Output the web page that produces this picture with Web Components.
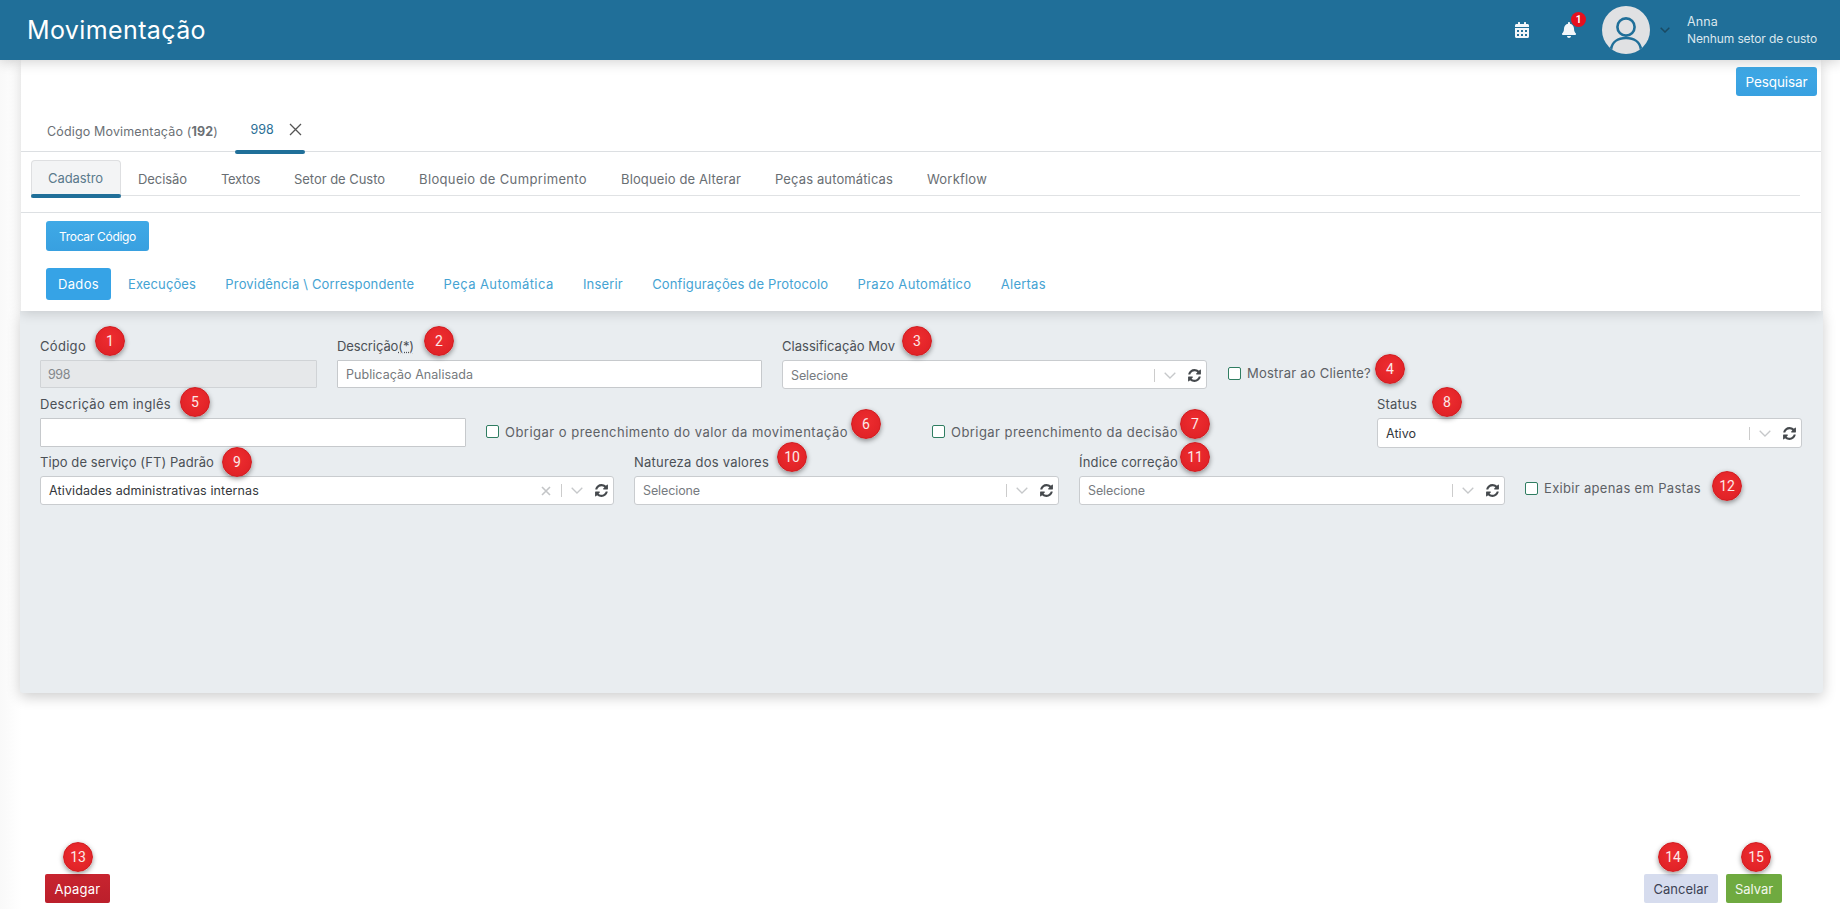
<!DOCTYPE html>
<html lang="pt-BR"><head><meta charset="utf-8"><title>Movimentação</title>
<style>
html,body{margin:0;height:909px;overflow:hidden}
body{position:relative;background:linear-gradient(90deg,#f9f9f9,#fff 22px);font-family:Inter,"Liberation Sans",sans-serif;font-size:13px;color:#555;display:flex;flex-direction:column}
</style></head><body>
<mov-header>
  <t-x slot="title" w="179">Movimentação</t-x>
  <t-x slot="user" w="31">Anna</t-x>
  <t-x slot="sector" w="130">Nenhum setor de custo</t-x>
</mov-header>
<mov-main>
  <mov-card>
    <mov-btn slot="search" kind="blue" style="width:81px;height:29px;font-size:13.5px"><t-x w="62">Pesquisar</t-x></mov-btn>
    <mov-tab slot="tabs"><t-x w="171">Código Movimentação (<b>192</b>)</t-x></mov-tab>
    <mov-tab slot="tabs" active closable><t-x w="23">998</t-x></mov-tab>
    <mov-subtab slot="subtabs" active><t-x w="55">Cadastro</t-x></mov-subtab>
    <mov-subtab slot="subtabs"><t-x w="49">Decisão</t-x></mov-subtab>
    <mov-subtab slot="subtabs"><t-x w="39">Textos</t-x></mov-subtab>
    <mov-subtab slot="subtabs"><t-x w="91">Setor de Custo</t-x></mov-subtab>
    <mov-subtab slot="subtabs"><t-x w="168">Bloqueio de Cumprimento</t-x></mov-subtab>
    <mov-subtab slot="subtabs"><t-x w="120">Bloqueio de Alterar</t-x></mov-subtab>
    <mov-subtab slot="subtabs"><t-x w="118">Peças automáticas</t-x></mov-subtab>
    <mov-subtab slot="subtabs"><t-x w="60">Workflow</t-x></mov-subtab>
    <mov-btn slot="action" kind="blue" style="width:103px;height:30px;font-size:12px"><t-x w="77">Trocar Código</t-x></mov-btn>
    <mov-pill slot="pills" active><t-x w="41">Dados</t-x></mov-pill>
    <mov-pill slot="pills"><t-x w="68">Execuções</t-x></mov-pill>
    <mov-pill slot="pills"><t-x w="189">Providência \ Correspondente</t-x></mov-pill>
    <mov-pill slot="pills"><t-x w="110">Peça Automática</t-x></mov-pill>
    <mov-pill slot="pills"><t-x w="40">Inserir</t-x></mov-pill>
    <mov-pill slot="pills"><t-x w="176">Configurações de Protocolo</t-x></mov-pill>
    <mov-pill slot="pills"><t-x w="114">Prazo Automático</t-x></mov-pill>
    <mov-pill slot="pills"><t-x w="45">Alertas</t-x></mov-pill>
  </mov-card>
  <mov-panel>
    <mov-row style="grid-template-columns:277px 425px 425px 1fr;column-gap:20px;">
      <mov-field><t-x slot="label" w="46">Código</t-x><mov-input disabled style="padding-top:1px"><t-x w="22">998</t-x></mov-input></mov-field>
      <mov-field><t-x slot="label" w="77">Descrição<span style="text-decoration:underline dotted">(*)</span></t-x><mov-input style="padding-top:1px"><t-x w="127">Publicação Analisada</t-x></mov-input></mov-field>
      <mov-field><t-x slot="label" w="113">Classificação Mov</t-x><mov-select placeholder style="padding-top:1px"><t-x w="57">Selecione</t-x></mov-select></mov-field>
      <mov-check style="margin:24px 0 0 1px;height:26px"><t-x w="124">Mostrar ao Cliente?</t-x></mov-check>
    </mov-row>
    <mov-row style="grid-template-columns:426px 426px 425px 1fr;column-gap:20px;margin-top:5px">
      <mov-field><t-x slot="label" w="131">Descrição em inglês</t-x><mov-input style="height:29px"></mov-input></mov-field>
      <mov-check style="margin-top:24px;height:27px"><t-x w="343">Obrigar o preenchimento do valor da movimentação</t-x></mov-check>
      <mov-check style="margin-top:24px;height:27px"><t-x w="227">Obrigar preenchimento da decisão</t-x></mov-check>
      <mov-field><t-x slot="label" w="40">Status</t-x><mov-select style="height:30px"><t-x w="30">Ativo</t-x></mov-select></mov-field>
    </mov-row>
    <mov-row style="grid-template-columns:574px 425px 426px 1fr;column-gap:20px;margin-top:4px">
      <mov-field><t-x slot="label" w="174">Tipo de serviço (FT) Padrão</t-x><mov-select clearable><t-x w="210">Atividades administrativas internas</t-x></mov-select></mov-field>
      <mov-field><t-x slot="label" w="135">Natureza dos valores</t-x><mov-select placeholder><t-x w="57">Selecione</t-x></mov-select></mov-field>
      <mov-field><t-x slot="label" w="99">Índice correção</t-x><mov-select placeholder><t-x w="57">Selecione</t-x></mov-select></mov-field>
      <mov-check style="margin-top:24px;height:24px"><t-x w="157">Exibir apenas em Pastas</t-x></mov-check>
    </mov-row>
  </mov-panel>
  <mov-footer>
    <mov-btn slot="left" kind="red" style="width:65px"><t-x w="46">Apagar</t-x></mov-btn>
    <mov-btn slot="right" kind="gray" style="width:74px"><t-x w="55">Cancelar</t-x></mov-btn>
    <mov-btn slot="right" kind="green" style="width:56px"><t-x w="38">Salvar</t-x></mov-btn>
  </mov-footer>
</mov-main>
<mov-badge style="left:95px;top:326px">1</mov-badge>
<mov-badge style="left:424px;top:326px">2</mov-badge>
<mov-badge style="left:902px;top:326px">3</mov-badge>
<mov-badge style="left:1375px;top:354px">4</mov-badge>
<mov-badge style="left:180px;top:387px">5</mov-badge>
<mov-badge style="left:851px;top:409px">6</mov-badge>
<mov-badge style="left:1180px;top:409px">7</mov-badge>
<mov-badge style="left:1432px;top:387px">8</mov-badge>
<mov-badge style="left:222px;top:447px">9</mov-badge>
<mov-badge style="left:777px;top:442px">10</mov-badge>
<mov-badge style="left:1180px;top:442px">11</mov-badge>
<mov-badge style="left:1712px;top:471px">12</mov-badge>
<mov-badge style="left:63px;top:842px">13</mov-badge>
<mov-badge style="left:1658px;top:842px">14</mov-badge>
<mov-badge style="left:1741px;top:842px">15</mov-badge>
<script>
const REFRESH='M1639 1056q0 5-1 7-64 268-268 434.5t-478 166.5q-146 0-282.5-55t-243.5-157l-129 129q-19 19-45 19t-45-19-19-45v-448q0-26 19-45t45-19h448q26 0 45 19t19 45-19 45l-137 137q71 66 161 102t187 36q134 0 250-65t186-179q11-17 53-117 8-23 30-23h192q13 0 22.5 9.5t9.5 22.5zm25-800v448q0 26-19 45t-45 19h-448q-26 0-45-19t-19-45 19-45l138-138q-148-137-349-137-134 0-250 65t-186 179q-11 17-53 117-8 23-30 23h-199q-13 0-22.5-9.5t-9.5-22.5v-7q65-268 270-434.5t480-166.5q146 0 284 55.5t245 156.5l130-129q19-19 45-19t45 19 19 45z';
const CAL='M0 464c0 26.5 21.5 48 48 48h352c26.5 0 48-21.5 48-48V192H0v272zm320-196c0-6.6 5.4-12 12-12h40c6.6 0 12 5.4 12 12v40c0 6.6-5.4 12-12 12h-40c-6.6 0-12-5.4-12-12v-40zm0 128c0-6.6 5.4-12 12-12h40c6.6 0 12 5.4 12 12v40c0 6.6-5.4 12-12 12h-40c-6.6 0-12-5.4-12-12v-40zM192 268c0-6.6 5.4-12 12-12h40c6.6 0 12 5.4 12 12v40c0 6.6-5.4 12-12 12h-40c-6.6 0-12-5.4-12-12v-40zm0 128c0-6.6 5.4-12 12-12h40c6.6 0 12 5.4 12 12v40c0 6.6-5.4 12-12 12h-40c-6.6 0-12-5.4-12-12v-40zM64 268c0-6.6 5.4-12 12-12h40c6.6 0 12 5.4 12 12v40c0 6.6-5.4 12-12 12H76c-6.6 0-12-5.4-12-12v-40zm0 128c0-6.6 5.4-12 12-12h40c6.6 0 12 5.4 12 12v40c0 6.6-5.4 12-12 12H76c-6.6 0-12-5.4-12-12v-40zM400 64h-48V16c0-8.8-7.2-16-16-16h-32c-8.8 0-16 7.2-16 16v48H160V16c0-8.8-7.2-16-16-16h-32c-8.8 0-16 7.2-16 16v48H48C21.5 64 0 85.5 0 112v48h448v-48c0-26.5-21.5-48-48-48z';
const BELL='M224 512c35.32 0 63.97-28.65 63.97-64H160.03c0 35.35 28.65 64 63.97 64zm215.39-149.71c-19.32-20.76-55.47-51.99-55.47-154.29 0-77.7-54.48-139.9-127.94-155.16V32c0-17.67-14.32-32-31.98-32s-31.98 14.33-31.98 32v20.84C118.56 68.1 64.08 130.3 64.08 208c0 102.3-36.15 133.53-55.47 154.29-6 6.45-8.66 14.16-8.61 21.71.11 16.4 12.98 32 32.1 32h383.8c19.12 0 32-15.6 32.1-32 .05-7.55-2.61-15.27-8.61-21.71z';
function def(name,html,extra){
  class C extends HTMLElement{
    constructor(){super();this.attachShadow({mode:'open'}).innerHTML=html;}
    connectedCallback(){extra&&extra.call(this);}
  }
  customElements.define(name,C);
}
def('mov-header',`<style>
:host{display:flex;align-items:center;height:60px;background:#206f99;color:#fff;padding-left:27px;box-shadow:0 2px 12px rgba(0,0,0,.18);position:relative;z-index:3;flex:none}
.t{font-size:25px;line-height:1;flex:1}
.cal{width:14px;height:16px;fill:#f3f7fa;margin-right:33px}
.bell{position:relative;width:14px;height:16px;margin-right:26px}
.bell svg{width:14px;height:16px;fill:#f3f7fa;display:block}
.n{position:absolute;left:9px;top:-10px;width:15px;height:15px;border-radius:50%;background:#e60f1e;font:700 10px/15px Roboto,sans-serif;text-align:center;color:#fff}
.av{width:48px;height:48px;display:block}
.ch{width:10px;height:6px;margin:0 17px 0 10px;fill:none;stroke:#1a4a63;stroke-width:1.5}
.u{width:153px;color:#dbe7ee;font-size:12px;line-height:17px}
.u div:first-child{font-size:12.5px}
</style>
<div class="t"><slot name="title"></slot></div>
<svg class="cal" viewBox="0 0 448 512"><path d="${CAL}"/></svg>
<div class="bell"><svg viewBox="0 0 448 512"><path d="${BELL}"/></svg><span class="n">1</span></div>
<svg class="av" viewBox="0 0 48 48"><defs><clipPath id="c"><circle cx="24" cy="24" r="24"/></clipPath></defs><circle cx="24" cy="24" r="24" fill="#e0e1e3"/><g clip-path="url(#c)" fill="none" stroke="#206f99" stroke-width="2.6"><circle cx="24" cy="21" r="8.6"/><path d="M9 43.5C10 36 16 32 24 32s14 4 15 11.5"/></g></svg>
<svg class="ch" viewBox="0 0 10 6"><path d="M.7.7 5 5 9.3.7"/></svg>
<div class="u"><div><slot name="user"></slot></div><div><slot name="sector"></slot></div></div>`);
def('mov-main',`<style>
:host{display:flex;flex-direction:column;flex:1;padding:0 18px 6px 20px;min-height:0}
</style><slot></slot>`);
def('mov-card',`<style>
:host{display:block;margin-left:1px;margin-right:1px;background:#fff;box-shadow:0 2px 12px rgba(0,0,0,.16);position:relative;z-index:2;height:251px;flex:none}
.s{display:flex;justify-content:flex-end;padding:7px 4px 0 0}
.tabs{display:flex;align-items:flex-end;height:55px;border-bottom:1px solid #dcdfe2}
.wrap{height:61px;box-sizing:border-box;border-bottom:1px solid #dde0e3;padding:8px 21px 0 10px}
.sub{display:flex;height:36px;box-sizing:border-box;border-bottom:1px solid #e0e2e4}
.act{padding:8px 0 0 25px;display:flex}
.pills{display:flex;align-items:center;gap:29.3px;padding:17px 0 0 25px}
</style>
<div class="s"><slot name="search"></slot></div>
<div class="tabs"><slot name="tabs"></slot></div>
<div class="wrap"><div class="sub"><slot name="subtabs"></slot></div></div>
<div class="act"><slot name="action"></slot></div>
<div class="pills"><slot name="pills"></slot></div>`);
def('mov-tab',`<style>
:host{display:flex;align-items:center;position:relative;height:40px;padding:0 17px 0 26px;font-size:12.5px;color:#6b7075;white-space:nowrap}
:host([active]){height:44px;width:70px;box-sizing:border-box;padding:0 0 0 15.6px;color:#2b6f96}
:host([active])::after{content:"";position:absolute;left:0;right:0;bottom:-3px;height:4px;border-radius:2px;background:#206f99}
svg{display:none;width:13px;height:13px;margin-left:15px;stroke:#555;stroke-width:1.3;fill:none}
:host([closable]) svg{display:block}
</style><slot></slot><svg viewBox="0 0 13 13"><path d="M1 1l11 11M12 1 1 12"/></svg>`);
def('mov-subtab',`<style>
:host{display:flex;align-items:center;box-sizing:border-box;height:35px;padding:2px 17px 0;color:#696e73;font-size:13px;position:relative}
:host([active]){height:38px;padding:0 17px 3px 16px;background:#f3f4f5;border:1px solid #dedfe1;border-bottom:0;border-radius:4px 4px 0 0;color:#5a7a8c;margin-bottom:-3px}
:host([active])::after{content:"";position:absolute;left:-1px;right:-1px;bottom:0;height:4px;background:#206f99;border-radius:2px}
</style><slot></slot>`);
def('mov-pill',`<style>
:host{display:flex;align-items:center;height:32px;color:#45a3d3;font-size:13px;white-space:nowrap}
:host([active]){box-sizing:border-box;width:65px;padding-left:12px;margin-right:-12.3px;background:#36a3e6;color:#fff;border-radius:3px}
</style><slot></slot>`);
def('mov-btn',`<style>
:host{display:flex;align-items:center;justify-content:center;box-sizing:border-box;height:29px;border-radius:2px;font-size:13px;white-space:nowrap}
:host([kind=blue]){background:linear-gradient(#3fa9e6,#38a0e0);color:#fff;border-radius:3px}
:host([kind=red]){background:linear-gradient(#c8242f,#bb1f2b);color:#fff}
:host([kind=gray]){background:#d6dcee;color:#3c4254}
:host([kind=green]){background:#6faa40;color:#f2f7ec}
</style><slot></slot>`);
def('mov-panel',`<style>
:host{display:block;height:382px;flex:none;box-sizing:border-box;background:#e9edf0;padding:25px 21px 0 20px;box-shadow:0 4px 14px rgba(0,0,0,.2);border-radius:0 0 3px 3px;position:relative;z-index:1;margin-right:-1px}
</style><slot></slot>`);
def('mov-row',`<style>:host{display:grid;align-items:start}</style><slot></slot>`);
def('mov-field',`<style>
:host{display:block}
.l{height:24px;line-height:20px;color:#4b5056;font-size:13px;white-space:nowrap}
</style><div class="l"><slot name="label"></slot></div><slot></slot>`);
def('mov-input',`<style>
:host{display:flex;align-items:center;box-sizing:border-box;height:28px;background:#fff;border:1px solid #c6c9cc;border-radius:1px;padding-left:8px;color:#75797d;font-size:12.5px}
:host([disabled]){background:#e6e8ea;padding-left:7px;border-color:#d0d3d6;color:#83878b}
</style><slot></slot>`);
def('mov-select',`<style>
:host{display:flex;align-items:center;box-sizing:border-box;height:29px;background:#fff;border:1px solid #c9cccf;border-radius:3px;padding:0 4px 0 8px;color:#33373b;font-size:12.5px}
:host([placeholder]){color:#777b7f}
.v{flex:1;white-space:nowrap}
.x{display:none;width:10px;height:10px;stroke:#c3c5c7;stroke-width:1.6;fill:none;margin-right:10px}
:host([clearable]) .x{display:block}
.s{width:1px;height:13px;background:#ccc}
.c{width:12px;height:7px;margin:0 11px 0 9px;stroke:#c6c8ca;stroke-width:1.3;fill:none}
.r{width:15px;height:15px;fill:#45494d}
</style><div class="v"><slot></slot></div>
<svg class="x" viewBox="0 0 10 10"><path d="M1 1l8 8M9 1 1 9"/></svg><span class="s"></span>
<svg class="c" viewBox="0 0 12 7"><path d="M.7.7 6 6 11.3.7"/></svg>
<svg class="r" viewBox="0 0 1792 1792"><path d="${REFRESH}"/></svg>`);
def('mov-check',`<style>
:host{display:flex;align-items:center;color:#5d6166;font-size:13px;white-space:nowrap}
.b{width:13px;height:13px;box-sizing:border-box;border:1.2px solid #2f7d61;border-radius:2px;background:#fff;margin-right:6px;flex:none}
</style><span class="b"></span><slot></slot>`);
def('mov-footer',`<style>
:host{display:flex;justify-content:space-between;margin-top:auto;padding:0 40px 0 25px}
.r{display:flex;gap:8px}
</style><slot name="left"></slot><div class="r"><slot name="right"></slot></div>`);
def('mov-badge',`<style>
:host{position:absolute;z-index:5;width:30px;height:30px;box-sizing:border-box;border-radius:50%;background:radial-gradient(circle at 50% 40%,#ee2d30,#dc1f24);border:1px solid #d01c20;box-shadow:0 2px 5px rgba(0,0,0,.4);color:#fbe9e9;font:14px/28px Roboto,sans-serif;text-align:center}
</style><slot></slot>`);
def('t-x',`<style>:host{display:inline-block;white-space:nowrap}</style><slot></slot>`,function(){
  const w=+this.getAttribute('w');const n=this.textContent.length;
  this.style.letterSpacing='0px';
  const a=this.getBoundingClientRect().width;
  this.style.letterSpacing=((w-a)/n).toFixed(3)+'px';
});
</script>
</body></html>
